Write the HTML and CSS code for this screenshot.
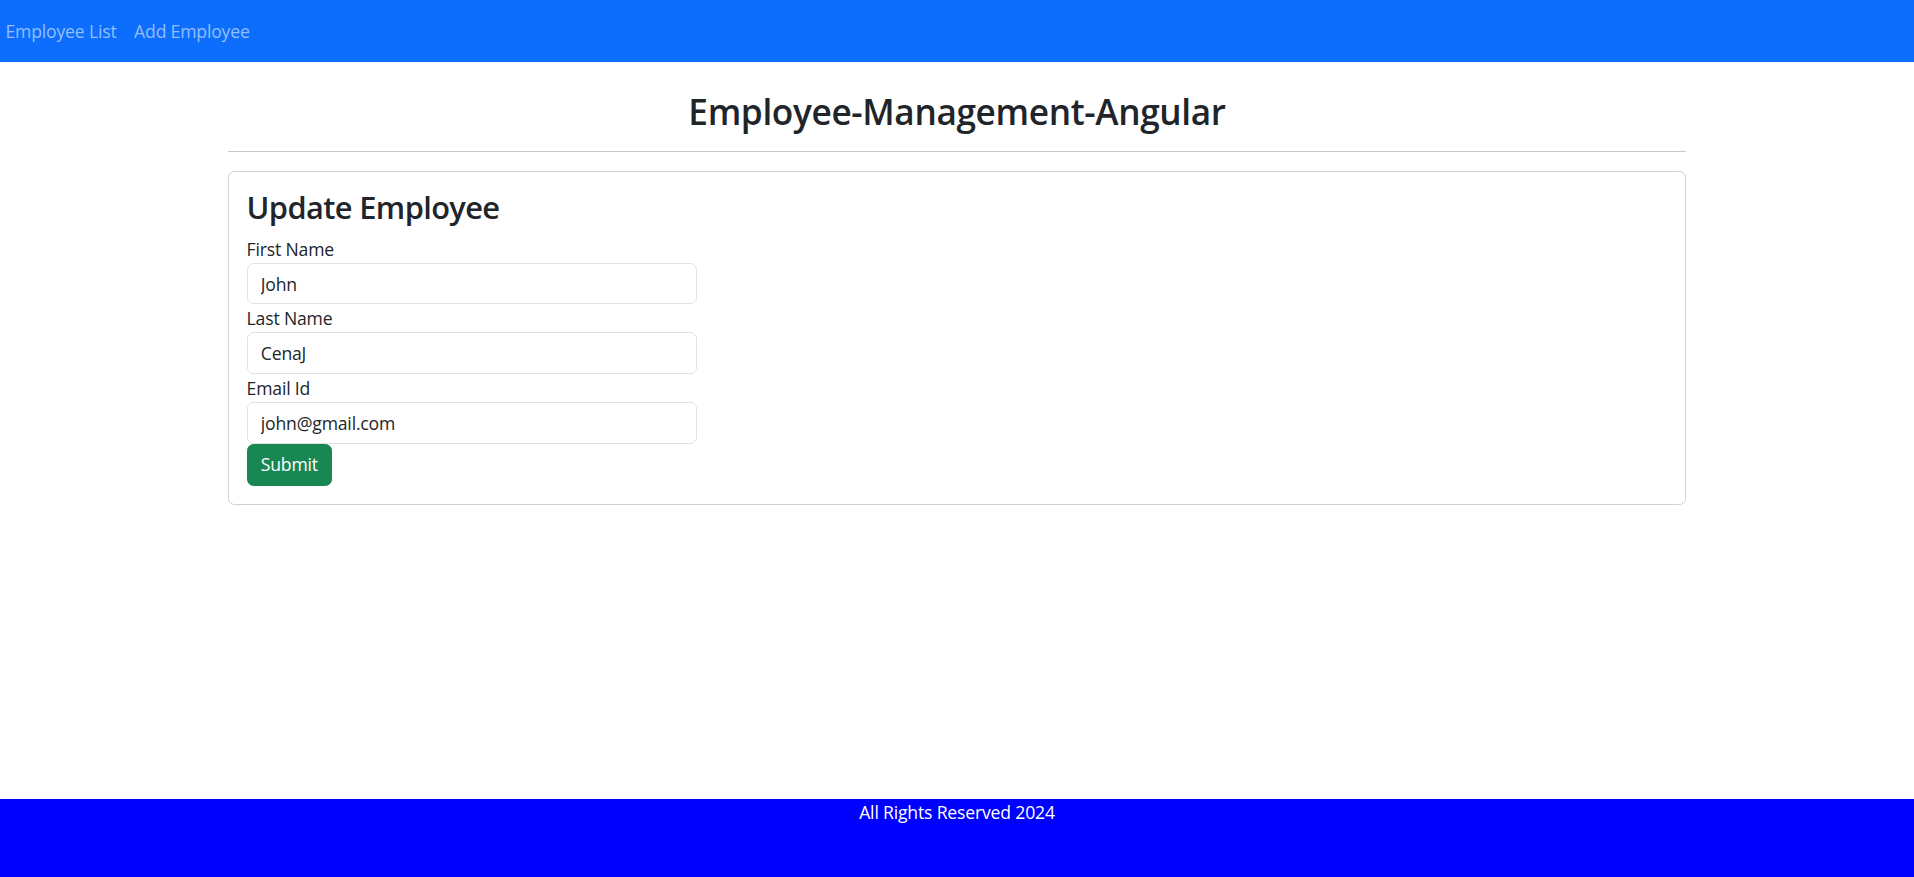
FILE: index.html
```html
<!DOCTYPE html>
<html lang="en">
<head>
<meta charset="utf-8">
<title>Employee-Management-Angular</title>
<link rel="stylesheet" href="styles.css">
</head>
<body>
<div class="app">
  <nav class="navbar">
    <ul class="nav-links">
      <li><a class="nav-link" href="#">Employee List</a></li>
      <li><a class="nav-link" href="#">Add Employee</a></li>
    </ul>
  </nav>
  <main class="page">
    <h2 class="page-title">Employee-Management-Angular</h2>
    <hr class="divider">
    <div class="card">
      <h3 class="card-title">Update Employee</h3>
      <form class="form">
        <label class="form-label" for="firstName">First Name</label>
        <input class="form-control" id="firstName" type="text" value="John">
        <label class="form-label" for="lastName">Last Name</label>
        <input class="form-control" id="lastName" type="text" value="CenaJ">
        <label class="form-label" for="emailId">Email Id</label>
        <input class="form-control" id="emailId" type="text" value="john@gmail.com">
        <button class="btn-submit" type="submit">Submit</button>
      </form>
    </div>
  </main>
  <footer class="footer">All Rights Reserved 2024</footer>
</div>
</body>
</html>
```

FILE: styles.css
```css
* {
  box-sizing: border-box;
}

html, body {
  margin: 0;
  padding: 0;
}

body {
  font-family: "Open Sans", "Noto Sans", sans-serif;
  font-size: 17.6px;
  line-height: 26.4px;
  letter-spacing: -0.01em;
  color: #212529;
  background: #fff;
}

.app {
  min-height: 100vh;
  display: flex;
  flex-direction: column;
}

.navbar {
  height: 62px;
  background: #0d6efd;
  display: flex;
  align-items: center;
}

.nav-links {
  list-style: none;
  margin: 0;
  padding: 0 0 0 5.5px;
  display: flex;
  gap: 17.6px;
}

.nav-link {
  color: #92befe;
  text-decoration: none;
  display: block;
}

.page {
  flex: 1;
  width: 1458px;
  margin: 0 auto;
}

.page-title {
  margin: 28px 0 0;
  font-size: 35.2px;
  line-height: 42.24px;
  font-weight: 600;
  letter-spacing: -0.01em;
  text-align: center;
}

.divider {
  margin: 18.6px 0 19px;
  border: 0;
  border-top: 1px solid #c8c8c8;
}

.card {
  border: 1px solid #d2d2d2;
  border-radius: 6.6px;
  padding: 17px 17.6px 17.6px;
}

.card-title {
  margin: 0 0 9px;
  font-size: 30.8px;
  line-height: 37px;
  font-weight: 600;
  letter-spacing: -0.02em;
}

.form {
  display: flex;
  flex-direction: column;
  align-items: flex-start;
}

.form-label {
  display: block;
  line-height: 28px;
}

.form-control {
  width: 450px;
  height: 41.6px;
  padding: 6.6px 13.2px;
  font-family: inherit;
  font-size: 17.6px;
  line-height: 26.4px;
  letter-spacing: inherit;
  color: #212529;
  background: #fff;
  border: 1px solid #dee2e6;
  border-radius: 6.6px;
  outline: none;
}

.btn-submit {
  height: 42.6px;
  padding: 6.6px 13.2px;
  font-family: inherit;
  font-size: 17.6px;
  line-height: 27.4px;
  letter-spacing: inherit;
  color: #fff;
  background: #198754;
  border: 1px solid #198754;
  border-radius: 6.6px;
  cursor: pointer;
}

.footer {
  height: 78px;
  background: #0000ff;
  color: #fff;
  text-align: center;
}
```
